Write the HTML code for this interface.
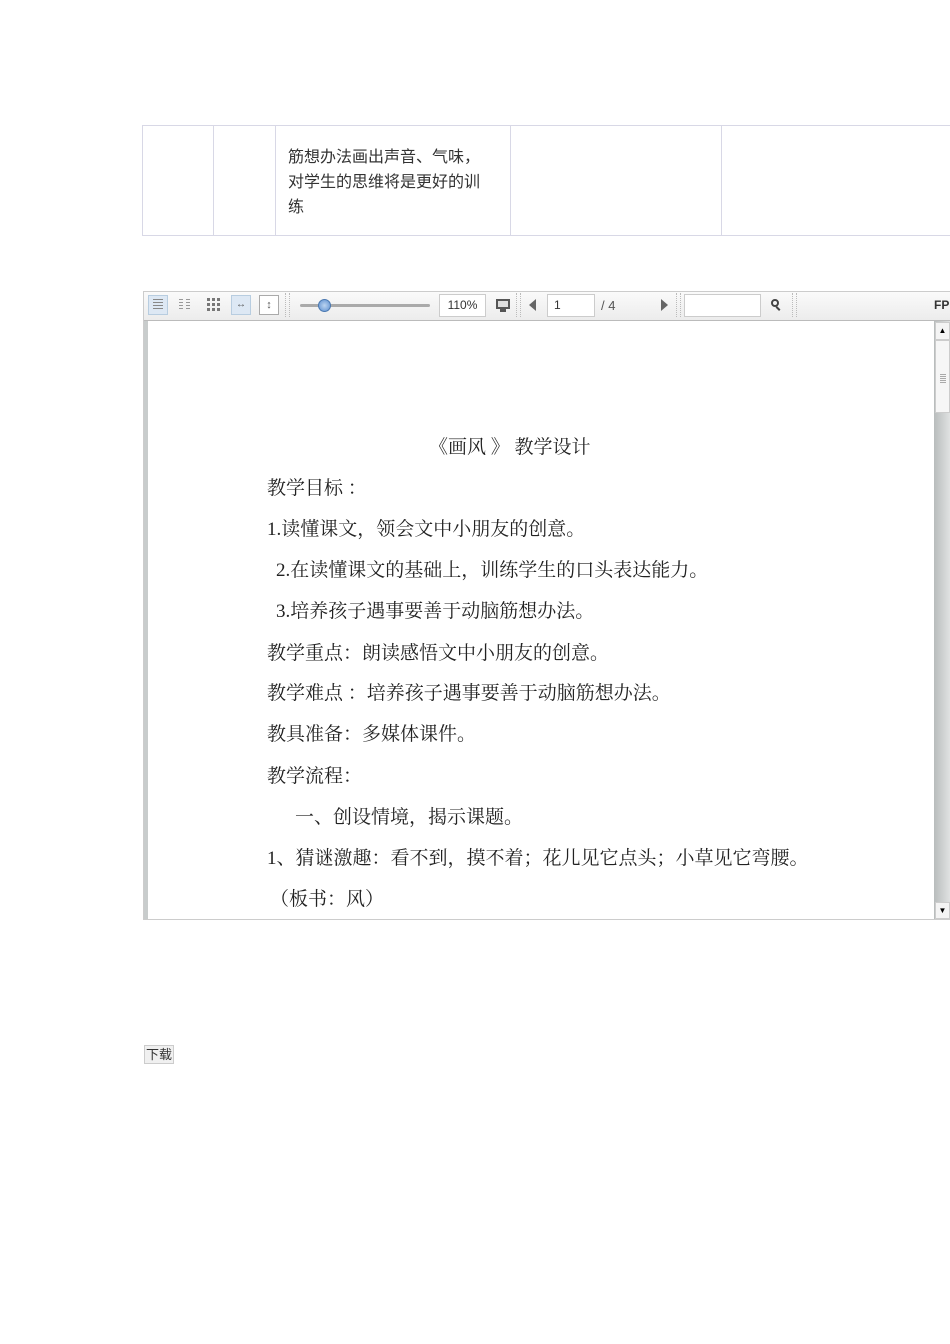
<!DOCTYPE html>
<html><head><meta charset="utf-8"><style>
body{margin:0;width:950px;height:1344px;background:#fff;position:relative;overflow:hidden;font-family:"Liberation Sans","Noto Sans CJK SC",sans-serif}
.a{position:absolute}
.cell{position:absolute;top:125px;height:111px;border:1px solid #d8d8e6;box-sizing:border-box}
.t{position:absolute;font-family:"Liberation Serif","Noto Serif CJK SC",serif;font-size:19px;color:#222;white-space:nowrap;line-height:22px}
.ic{position:absolute;top:295px;width:20px;height:20px;box-sizing:border-box}
.sep{position:absolute;top:293px;width:3px;height:24px;border-left:1px dotted #bbb;border-right:1px dotted #bbb}
</style></head><body>
<div class="cell" style="left:142px;width:72px"></div>
<div class="cell" style="left:213px;width:63px"></div>
<div class="cell" style="left:275px;width:236px"></div>
<div class="cell" style="left:510px;width:212px"></div>
<div class="cell" style="left:721px;width:240px"></div>
<div class="a" style="left:288px;top:145px;width:202px;font-size:16px;line-height:25px;color:#333">筋想办法画出声音、气味，对学生的思维将是更好的训练</div>

<div class="a" style="left:143px;top:291px;width:810px;height:629px;border:1px solid #ccc;border-right:none;box-sizing:border-box;background:#fff"></div>
<div class="a" style="left:144px;top:292px;width:806px;height:28px;background:linear-gradient(#fafafa,#ececec);border-bottom:1px solid #bbb"></div>
<div class="ic" style="left:148px;background:#dde8f4;border:1px solid #b8cde0"></div>
<div class="a" style="left:153px;top:299px;width:10px;height:12px;background:repeating-linear-gradient(#888 0 1px,transparent 1px 3px)"></div>
<div class="a" style="left:179px;top:299px;width:4px;height:12px;background:repeating-linear-gradient(#999 0 1px,transparent 1px 3px)"></div>
<div class="a" style="left:186px;top:299px;width:4px;height:12px;background:repeating-linear-gradient(#999 0 1px,transparent 1px 3px)"></div>
<div class="a" style="left:207px;top:298px;width:13px;height:13px;background:repeating-linear-gradient(90deg,#777 0 3px,transparent 3px 5px);-webkit-mask:repeating-linear-gradient(#000 0 3px,transparent 3px 5px)"></div>
<div class="ic" style="left:231px;background:#dde8f4;border:1px solid #b8cde0;font-size:10px;text-align:center;line-height:18px;color:#555">↔</div>
<div class="ic" style="left:259px;border:1px solid #aaa;background:#fff;font-size:11px;text-align:center;line-height:18px;color:#555">↕</div>
<div class="sep" style="left:285px"></div>
<div class="a" style="left:300px;top:304px;width:130px;height:3px;background:#aaa;border-radius:2px"></div>
<div class="a" style="left:318px;top:299px;width:13px;height:13px;border-radius:50%;background:radial-gradient(#bcd4f0,#5c8fd0);border:1px solid #4a78b0;box-sizing:border-box"></div>
<div class="a" style="left:439px;top:294px;width:47px;height:23px;background:#fff;border:1px solid #ccc;box-sizing:border-box;font-size:12px;line-height:21px;text-align:center;color:#333">110%</div>
<div class="a" style="left:496px;top:299px;width:14px;height:10px;border:2px solid #555;box-sizing:border-box;background:#ddd"></div>
<div class="a" style="left:500px;top:309px;width:6px;height:3px;background:#555"></div>
<div class="sep" style="left:516px"></div>
<div class="a" style="left:529px;top:299px;width:0;height:0;border-top:6px solid transparent;border-bottom:6px solid transparent;border-right:7px solid #666"></div>
<div class="a" style="left:547px;top:294px;width:48px;height:23px;background:#fff;border:1px solid #ccc;box-sizing:border-box;font-size:12px;line-height:21px;padding-left:6px;color:#333">1</div>
<div class="a" style="left:601px;top:298px;font-size:13px;color:#555">/ 4</div>
<div class="a" style="left:661px;top:299px;width:0;height:0;border-top:6px solid transparent;border-bottom:6px solid transparent;border-left:7px solid #666"></div>
<div class="sep" style="left:676px"></div>
<div class="a" style="left:684px;top:294px;width:77px;height:23px;background:#fff;border:1px solid #ccc;box-sizing:border-box"></div>
<div class="a" style="left:771px;top:299px;width:8px;height:8px;border:2px solid #444;border-radius:50%;box-sizing:border-box"></div>
<div class="a" style="left:777px;top:306px;width:2px;height:5px;background:#444;transform:rotate(-45deg)"></div>
<div class="sep" style="left:792px"></div>
<div class="a" style="left:934px;top:298px;font-size:12px;font-weight:bold;color:#333">FP</div>

<div class="a" style="left:144px;top:321px;width:4px;height:598px;background:#c8cccc"></div>
<div class="a" style="left:934px;top:321px;width:16px;height:598px;background:linear-gradient(90deg,#b8bcbc,#e0e2e2)"></div>
<div class="a" style="left:935px;top:322px;width:15px;height:18px;background:#f4f4f4;border:1px solid #ccc;box-sizing:border-box;font-size:8px;text-align:center;line-height:16px">▲</div>
<div class="a" style="left:935px;top:340px;width:15px;height:73px;background:#f6f6f6;border:1px solid #ccc;box-sizing:border-box"></div>
<div class="a" style="left:940px;top:374px;width:6px;height:9px;background:repeating-linear-gradient(#aaa 0 1px,transparent 1px 2px)"></div>
<div class="a" style="left:935px;top:902px;width:15px;height:17px;background:#f4f4f4;border:1px solid #ccc;box-sizing:border-box;font-size:8px;text-align:center;line-height:15px">▼</div>

<div class="t" style="left:429px;top:437px">《画风 》 教学设计</div>
<div class="t" style="left:267px;top:478px">教学目标 ：</div>
<div class="t" style="left:267px;top:519px">1.读懂课文，领会文中小朋友的创意。</div>
<div class="t" style="left:276px;top:560px">2.在读懂课文的基础上，训练学生的口头表达能力。</div>
<div class="t" style="left:276px;top:601px">3.培养孩子遇事要善于动脑筋想办法。</div>
<div class="t" style="left:267px;top:643px">教学重点：朗读感悟文中小朋友的创意。</div>
<div class="t" style="left:267px;top:683px">教学难点 ：培养孩子遇事要善于动脑筋想办法。</div>
<div class="t" style="left:267px;top:724px">教具准备：多媒体课件。</div>
<div class="t" style="left:267px;top:766px">教学流程：</div>
<div class="t" style="left:295px;top:807px">一、创设情境，揭示课题。</div>
<div class="t" style="left:267px;top:848px">1、猜谜激趣：看不到，摸不着；花儿见它点头；小草见它弯腰。</div>
<div class="t" style="left:270px;top:889px">（板书：风）</div>

<div class="a" style="left:144px;top:1045px;width:30px;height:19px;border:1px solid #ccc;background:#f0f0f0;box-sizing:border-box;font-size:13px;line-height:17px;text-align:center;color:#333">下载</div>
</body></html>
